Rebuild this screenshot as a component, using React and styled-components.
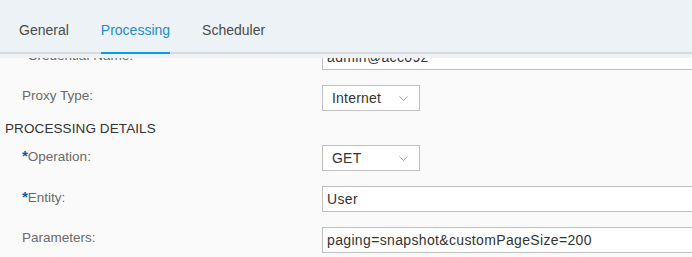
import React, { useLayoutEffect, useRef } from 'react';
import styled, { createGlobalStyle } from 'styled-components';

const GlobalStyle = createGlobalStyle`
  html, body {
    margin: 0;
    padding: 0;
    background: #fafafa;
    font-family: "Liberation Sans", Arial, sans-serif;
  }
`

const Page = styled.div`
  width: 692px;
  height: 257px;
  display: flex;
  flex-direction: column;
  overflow: hidden;
  background: #fafafa;
`

const TabBar = styled.div`
  background: #edf2f6;
  padding-bottom: 4px;
  flex: none;
`

const TabList = styled.div`
  display: flex;
  gap: 32px;
  padding-left: 19px;
  border-bottom: 2px solid #d9d9d9;
`

const Tab = styled.div`
  font-size: 14px;
  line-height: 20px;
  padding: 20px 0 12px;
  margin-bottom: -2px;
  color: ${p => (p.$active ? '#1b8ccf' : '#4a4a4a')};
  border-bottom: 2px solid ${p => (p.$active ? '#0a9ddf' : 'transparent')};
  cursor: pointer;
`

const Scroller = styled.div`
  flex: 1;
  overflow: hidden;
`

const Form = styled.div`
  display: flex;
  flex-direction: column;
`

const Row = styled.div`
  display: grid;
  grid-template-columns: 322px 420px;
  align-items: center;
  padding: 8px 0 7px;
`

const Label = styled.label`
  padding-left: 22px;
  font-size: 13.5px;
  color: #6a6a6a;
  margin-bottom: 6px;
`

const Star = styled.span`
  color: #0b5ea8;
  font-weight: bold;
  font-size: 15px;
`

const SectionTitle = styled.div`
  padding: 2px 0 0 5px;
  line-height: 17px;
  font-size: 13.5px;
  letter-spacing: 0.1px;
  color: #333;
`

const TextInput = styled.div`
  box-sizing: border-box;
  height: 26px;
  border: 1px solid #bfbfbf;
  background: #fff;
  padding: 0 4px;
  font-size: 14px;
  letter-spacing: 0.35px;
  line-height: 24px;
  color: #333;
  white-space: nowrap;
`

const Select = styled.div`
  box-sizing: border-box;
  width: 98px;
  height: 26px;
  border: 1px solid #bfbfbf;
  background: #fff;
  padding: 0 11px 0 9px;
  display: flex;
  align-items: center;
  justify-content: space-between;
  font-size: 14px;
  letter-spacing: 0.2px;
  color: #333;
`

const Chevron = () => (
  <svg width="9" height="5" viewBox="0 0 9 5">
    <path d="M0.5 0.5 L4.5 4.5 L8.5 0.5" fill="none" stroke="#a0a0a0" strokeWidth="1" />
  </svg>
)

const Field = ({ label, required, children }) => (
  <Row>
    <Label>
      {required && <Star>*</Star>}
      {label}
    </Label>
    {children}
  </Row>
)

export default function App() {
  const scrollRef = useRef(null);

  useLayoutEffect(() => {
    scrollRef.current.scrollTop = 22;
  }, []);

  return (
    <Page>
      <GlobalStyle />
      <TabBar>
        <TabList>
          <Tab>General</Tab>
          <Tab $active>Processing</Tab>
          <Tab>Scheduler</Tab>
        </TabList>
      </TabBar>
      <Scroller ref={scrollRef}>
        <Form>
          <Field label="Credential Name:" required>
            <TextInput>admin@acc092</TextInput>
          </Field>
          <Field label="Proxy Type:">
            <Select>Internet<Chevron /></Select>
          </Field>
          <SectionTitle>PROCESSING DETAILS</SectionTitle>
          <Field label="Operation:" required>
            <Select>GET<Chevron /></Select>
          </Field>
          <Field label="Entity:" required>
            <TextInput>User</TextInput>
          </Field>
          <Field label="Parameters:">
            <TextInput>paging=snapshot&amp;customPageSize=200</TextInput>
          </Field>
          <Field label="Query:">
            <TextInput></TextInput>
          </Field>
        </Form>
      </Scroller>
    </Page>
  );
}
